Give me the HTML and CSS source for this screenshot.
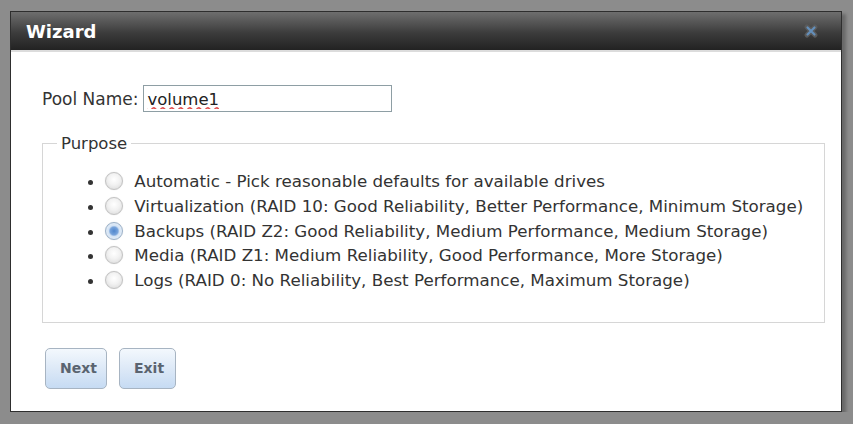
FILE: index.html
```html
<!DOCTYPE html>
<html lang="en">
<head>
    <meta charset="UTF-8">
    <title>Wizard</title>
    <link rel="stylesheet" href="styles.css">
</head>
<body>

<div class="dialog">
    <div class="titlebar">
        <h1>Wizard</h1>
        <span class="close">
            <svg width="16" height="16" viewBox="0 0 16 16">
                <path d="M4 4 L12 12 M12 4 L4 12" stroke="#5a5a5a" stroke-width="5" stroke-linecap="round"/>
                <path d="M4.5 4.5 L11.5 11.5 M11.5 4.5 L4.5 11.5" stroke="#648fba" stroke-width="2.2" stroke-linecap="round"/>
            </svg>
        </span>
    </div>
    <div class="content">
        <div class="pool-row">
            <label for="poolName">Pool Name:</label>
            <input type="text" id="poolName" value="volume1">
        </div>

        <fieldset class="purpose">
            <legend>Purpose</legend>
            <ul>
                <li><input type="radio" name="purpose"> Automatic - Pick reasonable defaults for available drives</li>
                <li><input type="radio" name="purpose"> Virtualization (RAID 10: Good Reliability, Better Performance, Minimum Storage)</li>
                <li><input type="radio" name="purpose" checked> Backups (RAID Z2: Good Reliability, Medium Performance, Medium Storage)</li>
                <li><input type="radio" name="purpose"> Media (RAID Z1: Medium Reliability, Good Performance, More Storage)</li>
                <li><input type="radio" name="purpose"> Logs (RAID 0: No Reliability, Best Performance, Maximum Storage)</li>
            </ul>
        </fieldset>

        <div class="buttons">
            <button class="next">Next</button>
            <button class="exit">Exit</button>
        </div>
    </div>
</div>

</body>
</html>
```

FILE: styles.css
```css
body {
    background-color: #8c8c8c;
    font-family: "DejaVu Sans", Verdana, sans-serif;
    margin: 0;
    padding: 11px 0 0 10px;
}

.dialog {
    width: 830px;
    height: 399px;
    border: 1px solid #2e2e2e;
    background-color: #ffffff;
    box-shadow: 4px 3px 3px rgba(0, 0, 0, 0.25);
    display: flex;
    flex-direction: column;
}

.titlebar {
    height: 38px;
    background: linear-gradient(to bottom, #6e6e6e 0%, #3c3c3c 55%, #222222 100%);
    border-bottom: 2px solid #dcdcdc;
    display: flex;
    align-items: center;
    justify-content: space-between;
    padding: 0 22px 0 15px;
}

.titlebar h1 {
    color: #ffffff;
    font-size: 18px;
    font-weight: bold;
    margin: 0;
}

.close svg {
    display: block;
}

.content {
    padding: 33px 0 0 31px;
}

.pool-row {
    display: flex;
    align-items: center;
    gap: 5px;
    font-size: 17px;
    color: #333;
}

.pool-row input {
    width: 249px;
    height: 27px;
    box-sizing: border-box;
    border: 1px solid #8e9ea4;
    padding: 2px 3px 0;
    font-family: "DejaVu Sans", Verdana, sans-serif;
    font-size: 16.5px;
    color: #222;
    text-decoration: underline wavy #e05050;
}

.purpose {
    width: 783px;
    box-sizing: border-box;
    margin: 22px 0 0 0;
    border: 1px solid #d6d6d6;
    padding: 0 0 29px 23px;
    font-size: 16.7px;
    color: #333;
}

.purpose legend {
    padding: 0 4px;
    margin-left: -9px;
    font-size: 16.5px;
}

.purpose ul {
    margin: 16px 0 0 0;
    padding-left: 39px;
}

.purpose li {
    line-height: 24.8px;
}

.purpose input[type="radio"] {
    appearance: none;
    width: 18px;
    height: 18px;
    margin: 0 6px 0 0;
    vertical-align: -3px;
    border: 1px solid #c2c2c2;
    border-radius: 50%;
    background: radial-gradient(circle at 50% 40%, #ffffff 0%, #f2f2f2 45%, #d6d6d6 100%);
    box-shadow: 0 0 1px #d0d0d0;
}

.purpose input[type="radio"]:checked {
    border-color: #9ab0c8;
    background: radial-gradient(circle, #4f86cc 0%, #78a4dc 35%, #d4e3f4 48%, #f4f8fc 100%);
}

.buttons {
    display: flex;
    gap: 12px;
    margin: 25px 0 0 3px;
}

button {
    height: 41px;
    padding: 0 14px;
    background: linear-gradient(to bottom, #f3f8fd 0%, #dde9f7 50%, #c6dbf3 100%);
    color: #5a6470;
    border: 1px solid #a7b4c2;
    border-radius: 5px;
    font-family: "DejaVu Sans", Verdana, sans-serif;
    font-weight: bold;
    font-size: 14px;
    cursor: pointer;
}

.next {
    width: 62px;
}

.exit {
    width: 57px;
}
```
